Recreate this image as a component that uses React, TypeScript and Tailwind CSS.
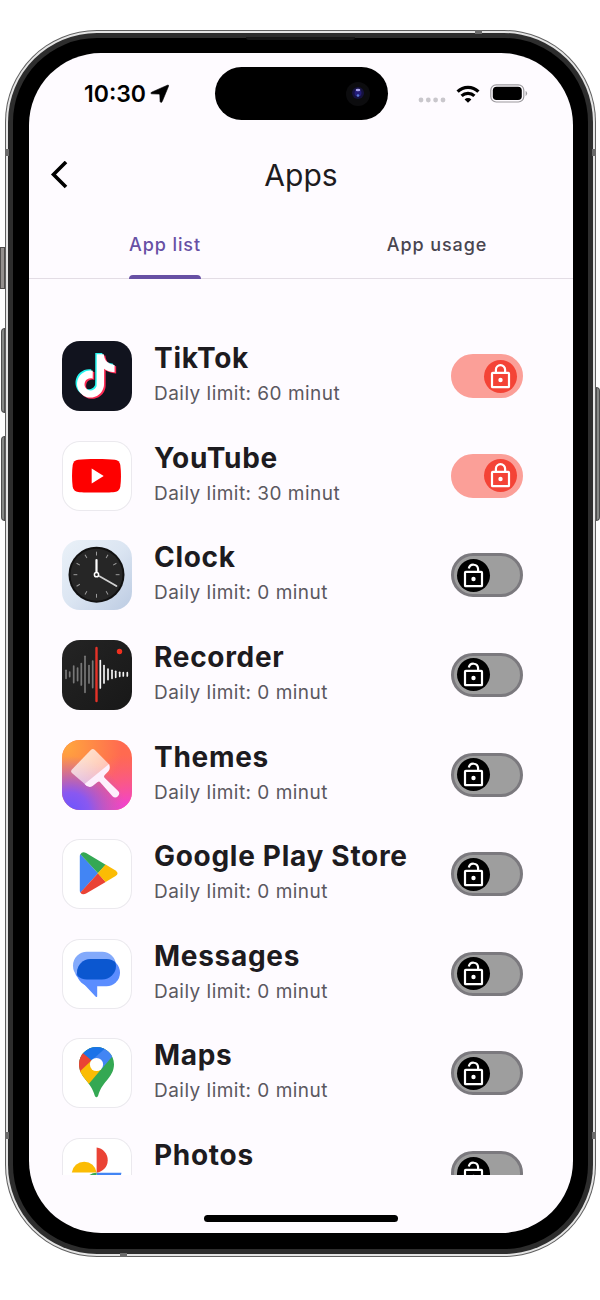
import { useState } from "react";
import type { ReactNode } from "react";

const NOTE =
  "M12.525.02c1.31-.02 2.61-.01 3.91-.02.08 1.53.63 3.09 1.75 4.17 1.12 1.11 2.7 1.62 4.24 1.79v4.03c-1.44-.05-2.89-.35-4.2-.97-.57-.26-1.1-.59-1.62-.93-.01 2.92.01 5.84-.02 8.75-.08 1.4-.54 2.79-1.35 3.94-1.31 1.92-3.58 3.17-5.91 3.21-1.43.08-2.86-.31-4.08-1.03-2.02-1.19-3.44-3.37-3.65-5.71-.02-.5-.03-1-.01-1.49.18-1.9 1.12-3.72 2.58-4.96 1.66-1.44 3.98-2.13 6.15-1.72.02 1.48-.04 2.96-.04 4.44-.99-.32-2.15-.23-3.02.37-.63.41-1.11 1.04-1.36 1.75-.21.51-.15 1.07-.14 1.61.24 1.64 1.82 3.02 3.5 2.87 1.12-.01 2.19-.66 2.77-1.61.19-.33.4-.67.41-1.06.1-1.79.06-3.57.07-5.36.01-4.03-.01-8.05.02-12.07z";

function Tile({ tone, children }: { tone: string; children: ReactNode }) {
  return (
    <span className={`block size-[70px] shrink-0 overflow-hidden rounded-[18px] ${tone}`}>
      <svg viewBox="0 0 70 70" className="block size-full" aria-hidden="true">
        {children}
      </svg>
    </span>
  );
}

const WHITE = "bg-white ring-1 ring-inset ring-[#ebe9ee]";

function TikTokIcon() {
  return (
    <Tile tone="bg-[#11131e]">
      <path d={NOTE} fill="#25f4ee" transform="translate(10.700 12) scale(1.800)" />
      <path d={NOTE} fill="#fe2c55" transform="translate(13.800 14.600) scale(1.800)" />
      <path d={NOTE} fill="#fff" transform="translate(12.200 13.300) scale(1.800)" />
    </Tile>
  );
}

function YouTubeIcon() {
  return (
    <Tile tone={WHITE}>
      <path
        d="M34.500 18c8 0 14.500.3 18.300.7 3.100.4 5 2.100 5.500 5.200.9 6.500.9 15.300 0 21.800-.5 3.100-2.400 4.800-5.500 5.200-7.600.9-29 .9-36.600 0-3.100-.4-5-2.100-5.500-5.200-.9-6.500-.9-15.300 0-21.800.5-3.100 2.400-4.800 5.500-5.200 3.800-.4 10.300-.7 18.300-.7z"
        fill="#fe0000"
      />
      <path d="M29.700 27.500v15l12-7.500z" fill="#fff" />
    </Tile>
  );
}

function ClockIcon() {
  return (
    <Tile tone="bg-linear-to-br from-[#eaf1f8] via-[#dbe5f2] to-[#bccbe2]">
      <circle cx="34.500" cy="34.700" r="28" fill="#111" />
      <circle cx="34.500" cy="34.700" r="26" fill="#262626" />
      {Array.from({ length: 12 }, (_, i) => (
        <path
          key={i}
          d="M34.500 11.700v3.800"
          stroke="#9a9a9a"
          strokeWidth="1"
          transform={`rotate(${i * 30} 34.500 34.700)`}
        />
      ))}
      <path d="M34.500 20v12" stroke="#fff" strokeWidth="2.200" strokeLinecap="round" />
      <path d="M37.500 36.200 54.500 46" stroke="#d0d0d0" strokeWidth="1.700" strokeLinecap="round" />
      <circle cx="34.500" cy="34.700" r="2.100" fill="#262626" stroke="#fff" strokeWidth="1.500" />
    </Tile>
  );
}

const WAVE: [number, number][] = [
  [4, 4], [7.7, 2.3], [11.7, 8.3], [15.6, 6.3], [19.3, 10.7], [23, 18], [27, 8.7], [30.7, 13.3],
  [38.3, 13.7], [42, 8.7], [46, 5.3], [50, 4], [53.7, 3], [57.7, 2], [61.3, 1.6], [65.3, 1.6],
];

function RecorderIcon() {
  return (
    <Tile tone="bg-linear-to-br from-[#242424] to-[#181818]">
      {WAVE.map(([x, h]) => (
        <path
          key={x}
          d={`M${x} ${34.3 - h}v${h * 2}`}
          stroke={x < 34 ? "#777" : "#f4f4f4"}
          strokeWidth="1.700"
          strokeLinecap="round"
        />
      ))}
      <path d="M34.500 8v53" stroke="#e53228" strokeWidth="2.400" strokeLinecap="round" />
      <circle cx="57.500" cy="11.500" r="2.700" fill="#f0301f" />
    </Tile>
  );
}

function ThemesIcon() {
  return (
    <Tile tone="bg-[#ff6a50]">
      <defs>
        <radialGradient id="t-orange" gradientUnits="userSpaceOnUse" cx="4" cy="6" r="56">
          <stop stopColor="#ffa63e" />
          <stop offset="1" stopColor="#ffa63e" stopOpacity="0" />
        </radialGradient>
        <radialGradient id="t-violet" gradientUnits="userSpaceOnUse" cx="8" cy="72" r="56">
          <stop stopColor="#6a55ff" />
          <stop offset="0.350" stopColor="#8a58f0" />
          <stop offset="1" stopColor="#b253dc" stopOpacity="0" />
        </radialGradient>
        <radialGradient id="t-pink" gradientUnits="userSpaceOnUse" cx="66" cy="70" r="56">
          <stop stopColor="#f03de0" />
          <stop offset="1" stopColor="#f84fa0" stopOpacity="0" />
        </radialGradient>
        <linearGradient id="t-head" x1="0" y1="0" x2="1" y2="1">
          <stop stopColor="#fff" stopOpacity="0.800" />
          <stop offset="1" stopColor="#fff" stopOpacity="0.500" />
        </linearGradient>
      </defs>
      <path d="M0 0h70v70H0z" fill="url(#t-orange)" />
      <path d="M0 0h70v70H0z" fill="url(#t-pink)" />
      <path d="M0 0h70v70H0z" fill="url(#t-violet)" />
      <path
        d="M10 29.500 28.800 9.900q2-2 4.100 0L46.500 23.700q1.200 1.500-.2 3L24.800 45.700 9.900 33q-1.700-1.600.1-3.500z"
        fill="url(#t-head)"
      />
      <path
        d="M22.600 43.900 47.100 24.100q1.700 4.300-.7 7.200l-3.900 4q-1 1.300 0 2.400L55.900 50.800a3.800 3.800 0 0 1-5.400 5.400L38.400 42.400q-1.300-1.500-2.800-.3l-5 3.900q-3.900 3-8-2.100z"
        fill="#fdf0fc"
      />
    </Tile>
  );
}

function PlayIcon() {
  return (
    <Tile tone={WHITE}>
      <path d="M18.400 15 36 34.300 18.400 53.800q-.6-1-.6-2.300V17.300q0-1.300.6-2.300z" fill="#4285f4" />
      <path d="m18.400 15.300 17.600 19 7.700-8.600L24.100 14.100q-3.900-2-5.700 1.200z" fill="#34a853" />
      <path d="m18.400 53.400 17.600-19.100 7.700 8.700-19.600 11.600q-3.900 2-5.700-1.200z" fill="#ea4335" />
      <path d="m43.600 25.600 10 5.900q3.900 2.800 0 5.600l-10 6L35.700 34.300z" fill="#fbbc04" />
    </Tile>
  );
}

function MessagesIcon() {
  return (
    <Tile tone={WHITE}>
      <clipPath id="bubble">
        <rect x="15" y="20" width="43" height="27.300" rx="13.600" />
      </clipPath>
      <rect x="11" y="12.800" width="43" height="27.800" rx="13.900" fill="#83aafb" />
      <rect x="15" y="20" width="43" height="27.300" rx="13.600" fill="#5b8dff" />
      <path d="M13.200 34.500q1 2.500 3 4.600l17.300 18.300q1.700 1.500 1.700-.5V47H46L30 34z" fill="#5b8dff" />
      <rect x="11" y="12.800" width="43" height="27.800" rx="13.900" fill="#0b57d0" clipPath="url(#bubble)" />
    </Tile>
  );
}

const PIN =
  "M34.500 9C24.800 9 17 16.700 17 26.300c0 5.700 2.400 10 5.500 14 4 5.300 8.200 9.600 10.300 17.400q1.700 3.300 3.300 0c2.100-7.800 6.300-12.100 10.400-17.400 3.100-4 5.500-8.300 5.500-14C52 16.700 44.200 9 34.500 9z";

function MapsIcon() {
  return (
    <Tile tone={WHITE}>
      <clipPath id="pin">
        <path d={PIN} />
      </clipPath>
      <g clipPath="url(#pin)">
        <path d="M10 5h50v60H10z" fill="#34a853" />
        <path d="m20.800 14.500 9 8L15 39V10z" fill="#ea4335" />
        <path d="m29.700 22.200 9.700 8.800L25 48 12 39z" fill="#fbbc04" />
        <path d="M20.800 14.900 34 5l14 2-18.100 15.500z" fill="#1a73e8" />
        <path d="M43 10.500 29.500 22.500l10 8.500L55 13z" fill="#4285f4" />
      </g>
      <circle cx="34.500" cy="26.500" r="6.600" fill="#fff" />
    </Tile>
  );
}

function PhotosIcon() {
  return (
    <Tile tone={WHITE}>
      <path d="M9.800 34.600a12.500 12.500 0 0 1 24.800 0z" fill="#fbbc04" />
      <path d="M34.600 9.600a12.700 12.700 0 0 1 0 25.200z" fill="#ea4335" />
      <path d="M34.600 34.800h24.800a12.500 12.500 0 0 1-24.800 0z" fill="#4285f4" />
      <path d="M34.600 34.800v25a12.500 12.500 0 0 1 0-25z" fill="#34a853" />
    </Tile>
  );
}

const APPS = [
  { name: "TikTok", limit: 60, locked: true, icon: <TikTokIcon /> },
  { name: "YouTube", limit: 30, locked: true, icon: <YouTubeIcon /> },
  { name: "Clock", limit: 0, locked: false, icon: <ClockIcon /> },
  { name: "Recorder", limit: 0, locked: false, icon: <RecorderIcon /> },
  { name: "Themes", limit: 0, locked: false, icon: <ThemesIcon /> },
  { name: "Google Play Store", limit: 0, locked: false, icon: <PlayIcon /> },
  { name: "Messages", limit: 0, locked: false, icon: <MessagesIcon /> },
  { name: "Maps", limit: 0, locked: false, icon: <MapsIcon /> },
  { name: "Photos", limit: 0, locked: false, icon: <PhotosIcon /> },
];

function LockSwitch({ label, initial }: { label: string; initial: boolean }) {
  const [on, setOn] = useState(initial);
  return (
    <button
      type="button"
      role="switch"
      aria-checked={on}
      aria-label={`Lock ${label}`}
      onClick={() => setOn(!on)}
      className={`flex h-11 w-[72px] shrink-0 items-center rounded-full border-[3px] ${
        on ? "justify-end border-[#fb9f98] bg-[#fb9f98] pr-[3px]" : "justify-start border-[#7b797e] bg-[#9e9e9e] pl-[3px]"
      }`}
    >
      <span className={`block size-[33px] rounded-full ${on ? "bg-[#f44336]" : "bg-black"}`}>
        <svg
          viewBox="0 0 33 33"
          className="block size-full"
          fill="none"
          stroke="#fff"
          strokeWidth="2.200"
          strokeLinejoin="round"
          aria-hidden="true"
        >
          <rect x="8" y="12.900" width="17" height="14.300" rx="0.800" />
          <path d={on ? "M11.900 13V9.700a4.600 4.600 0 0 1 9.200 0V13" : "M11.800 9.500a4.700 4.700 0 0 1 9.300.6V13"} />
          <circle cx="16.500" cy="20" r="2.200" fill="#fff" stroke="none" />
        </svg>
      </span>
    </button>
  );
}

function StatusBar() {
  return (
    <div className="grid grid-cols-[1fr_auto_1fr] items-center pt-3.5">
      <div className="flex items-center gap-1 pl-[55px] text-[23px] leading-7 font-semibold text-black">
        <span>10:30</span>
        <svg viewBox="0 0 20 20" className="size-5" aria-label="Location in use">
          <path
            d="M1.600 8.200 17.400 1.200q1.600-.5 1.100 1.100L12.200 17.600q-1.400 1.800-2.100 0L9.800 11q-.1-.9-1-.9l-7.200-.3q-1.700-.5 0-1.600z"
            fill="#000"
            stroke="#000"
            strokeWidth="0.600"
            strokeLinejoin="round"
          />
        </svg>
      </div>
      <div className="flex h-[53px] w-[173px] items-center justify-end rounded-full bg-black pr-[18px]">
        <svg viewBox="0 0 24 24" className="size-6" aria-hidden="true">
          <circle cx="12" cy="12" r="12" fill="#0c0c0e" />
          <circle cx="12" cy="11" r="6" fill="#16123f" />
          <circle cx="12" cy="11" r="3.500" fill="#241c78" />
          <ellipse cx="12" cy="8" rx="2.300" ry="1.200" fill="#aaa3ec" />
          <circle cx="12" cy="13.500" r="1.300" fill="#5b7bd6" />
        </svg>
      </div>
      <div className="flex items-center justify-end pr-[45px]">
        <svg viewBox="0 0 28 20" className="mr-2.5 h-5 w-7" fill="#c9c7cc" aria-label="No signal">
          <circle cx="3" cy="16" r="2.400" />
          <circle cx="10.300" cy="16" r="2.400" />
          <circle cx="17.600" cy="16" r="2.400" />
          <circle cx="25" cy="16" r="2.400" />
        </svg>
        <svg viewBox="0 0 24 18" className="mr-2.5 h-[18px] w-6" fill="none" stroke="#000" strokeWidth="3.200" aria-label="Wi-Fi">
          <path d="M1.600 6.600a14.800 14.800 0 0 1 20.800 0" />
          <path d="M5.600 10.900a9.200 9.200 0 0 1 12.800 0" />
          <path d="M12 17.800 8.600 14.400a4.800 4.800 0 0 1 6.800 0z" fill="#000" stroke="none" />
        </svg>
        <svg viewBox="0 0 38 19" className="h-[19px] w-[38px]" aria-label="Battery full">
          <rect x="0.800" y="0.800" width="33" height="17.200" rx="5.500" fill="none" stroke="#9c9a9e" strokeWidth="1.200" />
          <rect x="2.800" y="2.800" width="29" height="13.200" rx="3.800" fill="#000" />
          <path d="M35.600 6.800q3 2.600 0 5.400z" fill="#9c9a9e" />
        </svg>
      </div>
    </div>
  );
}

function Tab({ label, active, onClick }: { label: string; active: boolean; onClick: () => void }) {
  return (
    <button
      type="button"
      role="tab"
      aria-selected={active}
      onClick={onClick}
      className={`relative h-[68px] text-[18px] leading-7 font-medium tracking-wider ${active ? "text-[#6750a4]" : "text-[#49454f]"}`}
    >
      {label}
      {active && <span className="absolute inset-x-0 bottom-0 h-1 rounded-t-full bg-[#6750a4]" />}
    </button>
  );
}

export default function App() {
  const [tab, setTab] = useState("list");
  return (
    <div className="flex h-screen flex-col bg-white pt-[30px] pr-1 pb-[43px] pl-[5px] font-['Inter','Liberation_Sans',sans-serif]">
      <div className="relative flex min-h-0 flex-1 flex-col rounded-[92px] bg-[#606060] p-px">
        <span className="absolute top-[217px] -left-[5px] h-[42px] w-[5px] border border-[#4e4c4b] bg-[#94908e]" />
        <span className="absolute top-[298px] -left-1 h-[85px] w-1 rounded-l-sm border border-[#4e4e4e] bg-[#868886]" />
        <span className="absolute top-[406px] -left-1 h-[85px] w-1 rounded-l-sm border border-[#4e4e4e] bg-[#868886]" />
        <span className="absolute top-[357px] -right-1 h-[134px] w-1 rounded-r-sm border border-[#4e4e4e] bg-[#868886]" />
        <div className="flex min-h-0 flex-1 flex-col rounded-[91px] bg-[#e4e4e4] p-0.5">
          <div className="flex min-h-0 flex-1 flex-col rounded-[89px] bg-[#2d2d2d] p-[5px]">
            <div className="flex min-h-0 flex-1 flex-col rounded-[84px] bg-black pt-[15px] pr-[15px] pb-4 pl-4">
              <div className="flex min-h-0 flex-1 flex-col overflow-hidden rounded-[72px] bg-[#fefbff]">
                <StatusBar />
                <header className="mt-7 grid h-[53px] grid-cols-[1fr_auto_1fr] items-center">
                  <button type="button" aria-label="Back" className="pl-5">
                    <svg viewBox="0 0 22 28" className="h-7 w-[22px]" fill="none" stroke="#000" strokeWidth="3.600" aria-hidden="true">
                      <path d="M17 1 4.500 13.500 17 26" />
                    </svg>
                  </button>
                  <h1 className="text-[30px] leading-9 text-[#1d1b20]">Apps</h1>
                </header>
                <div role="tablist" className="mt-2.5 flex shadow-[inset_0_-1px_0_#e3dde5]">
                  <div className="flex flex-1 justify-center">
                    <Tab label="App list" active={tab === "list"} onClick={() => setTab("list")} />
                  </div>
                  <div className="flex flex-1 justify-center">
                    <Tab label="App usage" active={tab === "usage"} onClick={() => setTab("usage")} />
                  </div>
                </div>
                <main className="min-h-0 flex-1 overflow-y-auto pt-[62px] pr-[50px] pl-[33px] [scrollbar-width:none]">
                  <ul className="flex h-[867px] flex-col justify-between">
                    {APPS.map((app) => (
                      <li key={app.name} className="flex items-center">
                        {app.icon}
                        <div className="min-w-0 flex-1 pl-[22px] whitespace-nowrap">
                          <h2 className="text-[28px] leading-[35px] font-bold tracking-wide text-[#1d1b20]">{app.name}</h2>
                          <p className="text-[19px] leading-[35px] tracking-wide text-[#5b585f]">Daily limit: {app.limit} minut</p>
                        </div>
                        <LockSwitch label={app.name} initial={app.locked} />
                      </li>
                    ))}
                  </ul>
                </main>
                <div className="flex justify-center pt-10 pb-[11px]">
                  <span className="block h-[7px] w-[194px] rounded-full bg-black" />
                </div>
              </div>
            </div>
          </div>
        </div>
        <span className="absolute top-[7px] left-[241px] h-[3px] w-[109px] rounded-b-sm bg-[#161616]" />
        <span className="absolute top-[119px] left-0 h-[7px] w-1 bg-[#6b6b6b]" />
        <span className="absolute top-[119px] right-0 h-[7px] w-1 bg-[#6b6b6b]" />
        <span className="absolute bottom-[118px] left-0 h-[7px] w-1 bg-[#6b6b6b]" />
        <span className="absolute right-0 bottom-[118px] h-[7px] w-1 bg-[#6b6b6b]" />
        <span className="absolute top-0 right-[114px] h-1 w-[7px] bg-[#6b6b6b]" />
        <span className="absolute bottom-0 left-[115px] h-1 w-[7px] bg-[#6b6b6b]" />
      </div>
    </div>
  );
}
